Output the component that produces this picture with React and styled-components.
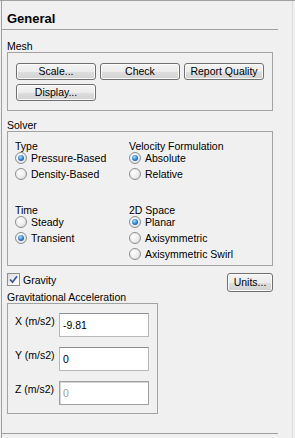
import styled, { createGlobalStyle } from 'styled-components';

const GlobalStyle = createGlobalStyle`
  html, body {
    margin: 0;
    padding: 0;
    background: #f0f0f0;
  }
  body {
    font-family: "Liberation Sans", Arial, sans-serif;
    font-size: 10.5px;
    color: #000;
  }
`;

const Frame = styled.div`
  width: 295px;
  height: 438px;
  box-sizing: border-box;
  border-top: 1px solid #a0a0a0;
  display: flex;
`;

const Panel = styled.div`
  width: 277px;
  margin-left: 1px;
  border-left: 1px solid #a0a0a0;
  box-sizing: border-box;
  display: flex;
  flex-direction: column;
`;

const Gutter = styled.div`
  flex: 1;
  margin-right: 2px;
  border-right: 1px solid #dcdcdc;
`;

const Title = styled.h2`
  margin: 0;
  padding: 10px 0 2px 5px;
  font-size: 13px;
  line-height: 16px;
  font-weight: bold;
  border-bottom: 1px solid #a0a0a0;
`;

const SectionLabel = styled.div`
  margin: ${(p) => p.$top || 0}px 0 0 5px;
  line-height: 12px;
`;

const GroupBox = styled.div`
  margin: 0 5px;
  width: ${(p) => p.$width || 266}px;
  box-sizing: border-box;
  border: 1px solid #a3a3a3;
`;

const ButtonGrid = styled.div`
  display: grid;
  grid-template-columns: repeat(3, 80px);
  grid-auto-rows: 17px;
  gap: 4px;
  padding: 10px 8px 9px 8px;
`;

const Button = styled.button`
  font-family: inherit;
  font-size: 10.5px;
  color: #000;
  width: ${(p) => p.$width || 80}px;
  height: ${(p) => p.$height || 17}px;
  padding: 0;
  box-sizing: border-box;
  border: 1px solid #707070;
  border-radius: 3px;
  background: linear-gradient(to bottom, #f4f4f4 0%, #ececec 50%, #dedede 51%, #d2d2d2 100%);
  box-shadow: inset 0 0 0 1px #fbfbfb;
  line-height: 1;
`;

const SolverGrid = styled.div`
  display: grid;
  grid-template-columns: 114px 1fr;
  row-gap: 24px;
  padding: 10px 0 3px 7px;
`;

const Field = styled.div`
  display: flex;
  flex-direction: column;
`;

const FieldLabel = styled.div`
  line-height: 8px;
  height: 8px;
`;

const OptionRow = styled.div`
  display: flex;
  align-items: center;
  height: 16px;
  gap: 4px;
`;

const RadioMark = styled.span`
  width: 12px;
  height: 12px;
  box-sizing: border-box;
  border-radius: 50%;
  border: 1px solid #8c8e90;
  background: radial-gradient(circle at 35% 35%, #ffffff 0%, #ececec 55%, #cfd1d3 100%);
  display: flex;
  align-items: center;
  justify-content: center;

  &::after {
    content: '';
    display: ${(p) => (p.$checked ? 'block' : 'none')};
    width: 6px;
    height: 6px;
    border-radius: 50%;
    background: radial-gradient(circle at 40% 35%, #a8e0ff 0%, #2d7cc8 55%, #0e3c72 100%);
  }
`;

const GravityRow = styled.div`
  display: flex;
  justify-content: space-between;
  align-items: flex-start;
  height: 18px;
  margin: 7px 5px 0 5px;
`;

const CheckLabel = styled.label`
  display: flex;
  align-items: center;
  gap: 3px;
  height: 13px;
`;

const CheckBox = styled.span`
  width: 13px;
  height: 13px;
  box-sizing: border-box;
  border: 1px solid #8c8e90;
  background: linear-gradient(135deg, #dcdcdc 0%, #f4f4f4 60%, #ffffff 100%);
  display: flex;
  align-items: center;
  justify-content: center;
`;

const AccelGrid = styled.div`
  display: grid;
  grid-template-columns: 44px 90px;
  grid-auto-rows: 24px;
  row-gap: 10px;
  padding: 9px 8px 8px 7px;
`;

const AxisLabel = styled.div`
  padding-top: 2px;
  line-height: 12px;
`;

const TextBox = styled.input`
  font-family: inherit;
  font-size: 10.5px;
  width: 90px;
  height: 24px;
  box-sizing: border-box;
  margin: 0;
  padding: 0 3px;
  border: 1px solid #b7b9bd;
  border-top-color: #8e9096;
  background: #fff;
  color: #000;
  outline: none;

  &:disabled {
    color: #a0a0a0;
    border-color: #a0a0a0;
    box-shadow: inset 1px 1px 0 #d4d4d4;
  }
`;

const Footer = styled.div`
  margin-top: auto;
  height: 5px;
  box-sizing: border-box;
  border-top: 1px solid #a0a0a0;
`;

const RadioGroup = ({ label, options, value }) => (
  <Field>
    <FieldLabel>{label}</FieldLabel>
    {options.map((o) => (
      <OptionRow key={o}>
        <RadioMark $checked={o === value} />
        {o}
      </OptionRow>
    ))}
  </Field>
);

const App = () => (
  <>
    <GlobalStyle />
    <Frame>
      <Panel>
        <Title>General</Title>

        <SectionLabel $top={10}>Mesh</SectionLabel>
        <GroupBox>
          <ButtonGrid>
            <Button>Scale...</Button>
            <Button>Check</Button>
            <Button>Report Quality</Button>
            <Button>Display...</Button>
          </ButtonGrid>
        </GroupBox>

        <SectionLabel $top={8}>Solver</SectionLabel>
        <GroupBox>
          <SolverGrid>
            <RadioGroup
              label="Type"
              options={['Pressure-Based', 'Density-Based']}
              value="Pressure-Based"
            />
            <RadioGroup
              label="Velocity Formulation"
              options={['Absolute', 'Relative']}
              value="Absolute"
            />
            <RadioGroup label="Time" options={['Steady', 'Transient']} value="Transient" />
            <RadioGroup
              label="2D Space"
              options={['Planar', 'Axisymmetric', 'Axisymmetric Swirl']}
              value="Planar"
            />
          </SolverGrid>
        </GroupBox>

        <GravityRow>
          <CheckLabel>
            <CheckBox>
              <svg width="9" height="9" viewBox="0 0 9 9">
                <path d="M1 4.5 L3.5 7.2 L8 1.2" fill="none" stroke="#3b5a9e" strokeWidth="1.8" />
              </svg>
            </CheckBox>
            Gravity
          </CheckLabel>
          <Button $width={46} $height={19}>Units...</Button>
        </GravityRow>

        <SectionLabel>Gravitational Acceleration</SectionLabel>
        <GroupBox $width={151}>
          <AccelGrid>
            <AxisLabel>X (m/s2)</AxisLabel>
            <TextBox defaultValue="-9.81" />
            <AxisLabel>Y (m/s2)</AxisLabel>
            <TextBox defaultValue="0" />
            <AxisLabel>Z (m/s2)</AxisLabel>
            <TextBox defaultValue="0" disabled />
          </AccelGrid>
        </GroupBox>

        <Footer />
      </Panel>
      <Gutter />
    </Frame>
  </>
);

export default App;
